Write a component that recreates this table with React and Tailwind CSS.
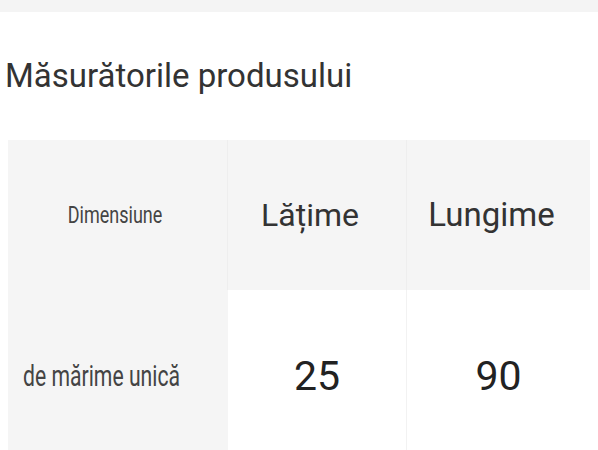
export default function App() {
  const rows = [{ label: "de mărime unică", width: "25", length: "90" }];

  return (
    <div className="min-h-screen bg-white" style={{ fontFamily: "Roboto, 'Noto Sans', sans-serif" }}>
      {/* top strip */}
      <div className="h-3 bg-[#f4f4f4]" />

      {/* title */}
      <h1 className="mt-[44px] pl-[5px] text-[33px] leading-[40px] font-normal text-[#333]">
        Măsurătorile produsului
      </h1>

      {/* table */}
      <div className="mt-[44px] ml-[8px] mr-[8px] grid grid-cols-[220px_179px_1fr]">
        <div className="h-[150px] bg-[#f5f5f5] flex items-center justify-center pr-[5px] border-r border-[#eeeeee]">
          <span className="inline-block text-[24px] text-[#444] scale-x-[0.75] whitespace-nowrap">Dimensiune</span>
        </div>
        <div className="h-[150px] bg-[#f5f5f5] flex items-center justify-center pr-[14px] border-r border-[#eeeeee]">
          <span className="text-[32px] text-[#333]">Lățime</span>
        </div>
        <div className="h-[150px] bg-[#f5f5f5] flex items-center justify-center pr-[14px]">
          <span className="text-[33px] text-[#333]">Lungime</span>
        </div>

        {rows.map((row) => (
          <div key={row.label} className="contents">
            <div className="h-[174px] bg-[#f5f5f5] flex items-center justify-center pr-[32px]">
              <span className="inline-block text-[29px] text-[#444] scale-x-[0.73] whitespace-nowrap">
                {row.label}
              </span>
            </div>
            <div className="h-[174px] bg-white flex items-center justify-center border-r border-[#f2f2f2]">
              <span className="text-[41px] text-[#222]">{row.width}</span>
            </div>
            <div className="h-[174px] bg-white flex items-center justify-center">
              <span className="text-[41px] text-[#222]">{row.length}</span>
            </div>
          </div>
        ))}
      </div>
    </div>
  );
}
